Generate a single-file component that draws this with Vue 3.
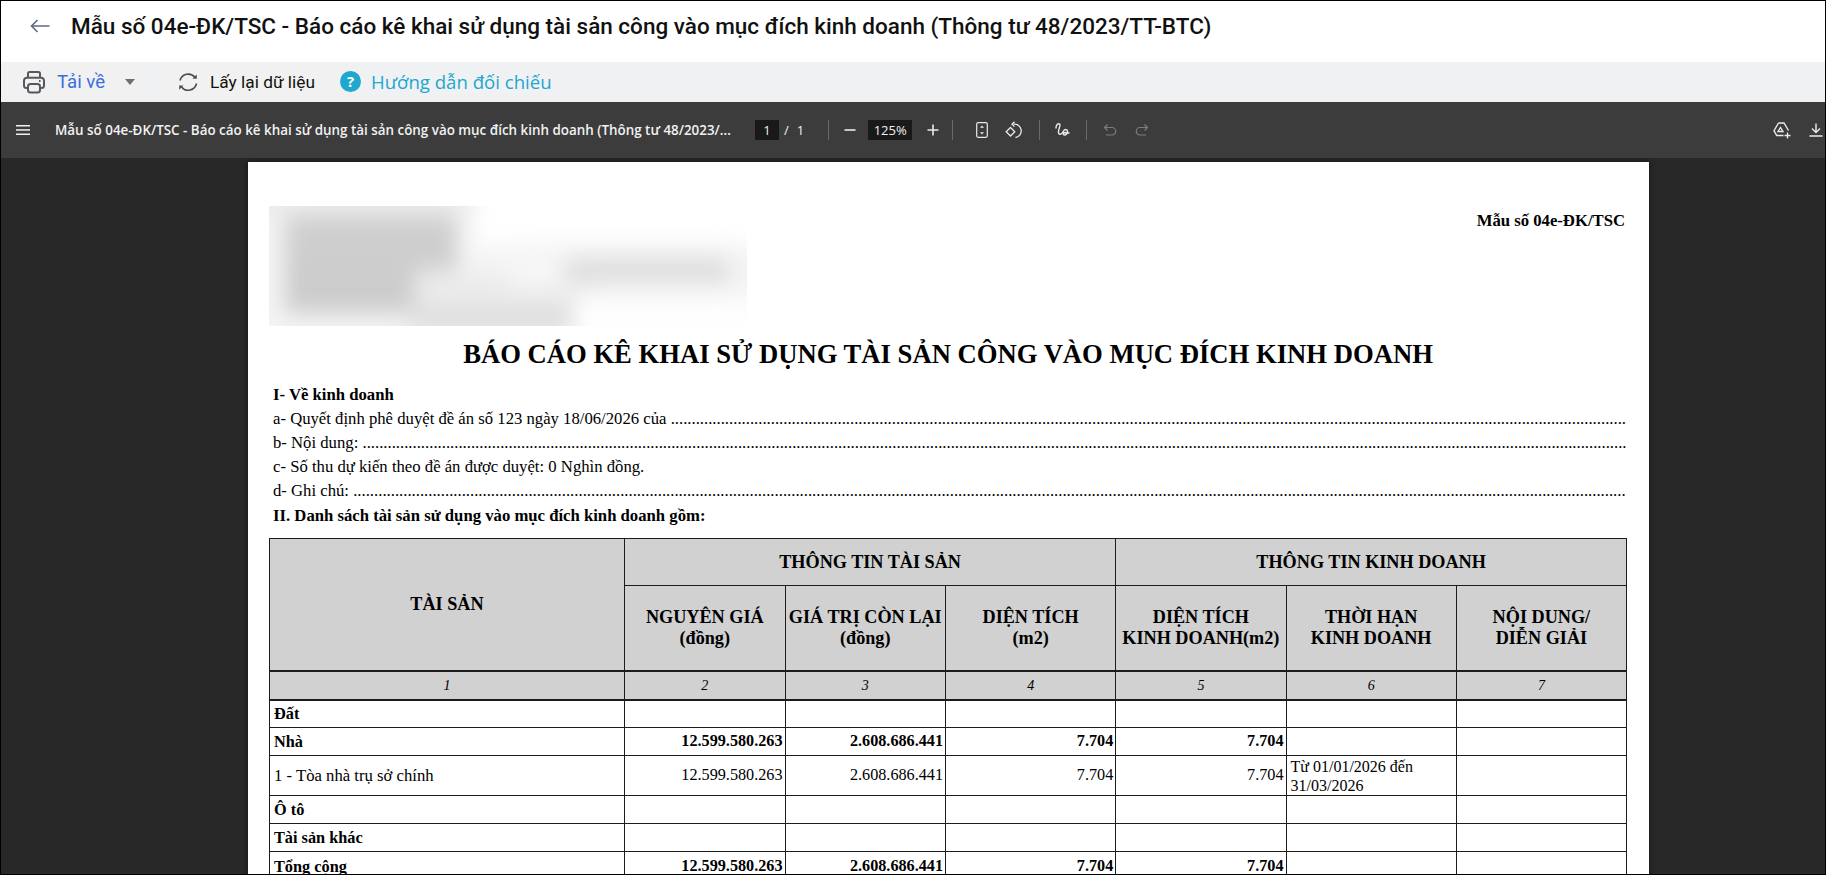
<template>
  <div class="shell">
    <header class="topbar">
      <svg class="back" width="20" height="14" viewBox="0 0 20 14" fill="none" stroke="#5f6b80" stroke-width="1.6">
        <path d="M19.5 7H1.5M7.5 1L1.5 7l6 6" />
      </svg>
      <h1 class="title">{{ reportTitle }}</h1>
    </header>

    <div class="actions">
      <button class="action action-print">
        <svg width="24" height="24" viewBox="0 0 24 24" fill="none" stroke="#55595f" stroke-width="2">
          <path d="M6 8V3.5A1.5 1.5 0 0 1 7.500 2h9A1.500 1.500 0 0 1 18 3.500V8" />
          <path d="M6 18H4.500A2.500 2.500 0 0 1 2 15.500V10.500A3 3 0 0 1 5 7.800h14a3 3 0 0 1 3 2.700v5a2.500 2.500 0 0 1-2.500 2.500H18" />
          <rect x="6" y="14" width="12" height="8.500" rx="2.500" />
          <path d="M17 11h1.500" />
        </svg>
        <span class="action-blue">Tải về</span>
        <span class="caret"></span>
      </button>
      <button class="action action-reload">
        <svg width="24" height="24" viewBox="0 0 24 24" fill="none" stroke="#4a4d52" stroke-width="1.600">
          <path d="M4 10.500A8.500 8.500 0 0 1 19 7.500" />
          <path d="M20.500 13.500A8.500 8.500 0 0 1 5.500 17" />
          <path d="M20.800 4.500v4.300h-4.300z" fill="#4a4d52" stroke="none" />
          <path d="M3.200 19.800v-4.300h4.300z" fill="#4a4d52" stroke="none" />
        </svg>
        <span>Lấy lại dữ liệu</span>
      </button>
      <a class="guide">
        <span class="guide-icon">?</span>
        <span>Hướng dẫn đối chiếu</span>
      </a>
    </div>

    <div class="viewerbar">
      <svg class="menu" width="14" height="12" viewBox="0 0 14 12" fill="#f1f1f1">
        <rect y="1" width="14" height="1.500" />
        <rect y="5.200" width="14" height="1.500" />
        <rect y="9.500" width="14" height="1.500" />
      </svg>
      <div class="doc-name">{{ shortTitle }}</div>
      <span class="num-box page-box">1</span>
      <span class="slash">/</span>
      <span class="page-total">1</span>
      <i class="divider div-a"></i>
      <svg class="zoom-out" width="12" height="12" viewBox="0 0 12 12" fill="#e8eaed"><rect x="0.500" y="5.200" width="11" height="1.600" /></svg>
      <span class="num-box zoom-box">125%</span>
      <svg class="zoom-in" width="12" height="12" viewBox="0 0 12 12" fill="#e8eaed"><path d="M5.200.500h1.600v4.700h4.700v1.600H6.800v4.700H5.200V6.800H.500V5.200h4.700z" /></svg>
      <i class="divider div-b"></i>
      <svg class="fit" width="12" height="16" viewBox="0 0 12 16" fill="none" stroke="#e8eaed" stroke-width="1.200">
        <rect x="0.700" y="0.700" width="10.600" height="14.600" rx="1.500" />
        <path d="M6 3.500 8 5.800H4zM6 12.500 4 10.200h4z" fill="#e8eaed" stroke="none" />
      </svg>
      <svg class="rotate" width="17" height="18" viewBox="0 0 17 18" fill="none" stroke="#e8eaed" stroke-width="1.300">
        <path d="M5.500 6.500 9.800 10.800 5.500 15 1.200 10.800z" />
        <path d="M8.500 3.200a6.500 6.500 0 0 1 2 13.300" />
        <path d="M9.500 .800 7 3.200l2.500 2.400" />
      </svg>
      <i class="divider div-c"></i>
      <svg class="draw" width="16" height="16" viewBox="0 0 16 16" fill="none" stroke="#e8eaed" stroke-width="1.400" stroke-linecap="round">
        <path d="M2 6C2 3 4 1 5.500 2c2 1-2 6-1 9 .8 2.500 3.500 1 5-2 1-2 3.500-2 4-0 .5 2-1.500 4-3 4-2 0-1.500-2.500.5-2.500L15 11" />
      </svg>
      <i class="divider div-d"></i>
      <svg class="undo" width="14" height="14" viewBox="0 0 14 14" fill="none" stroke="#7b7c7e" stroke-width="1.200">
        <path d="M1.500 4.500h7.500a3.500 3.500 0 0 1 0 7.500H3" />
        <path d="M4.500 1.500 1.500 4.500l3 3" />
      </svg>
      <svg class="redo" width="14" height="14" viewBox="0 0 14 14" fill="none" stroke="#7b7c7e" stroke-width="1.200">
        <path d="M12.500 4.500H5a3.500 3.500 0 0 0 0 7.500h6" />
        <path d="M9.500 1.500l3 3-3 3" />
      </svg>
      <svg class="drive" width="18" height="17" viewBox="0 0 18 17" fill="none" stroke="#e8eaed" stroke-width="1.400">
        <path d="M5.500 1h5.500l4.500 7.500M5.500 1 1 8.700l2.700 4.800h6.800" />
        <path d="M7.500 5.500 5 9.500h5z" />
        <path d="M14.500 10.500v6M11.500 13.500h6" />
      </svg>
      <svg class="download" width="14" height="14" viewBox="0 0 14 14" fill="none" stroke="#e8eaed" stroke-width="1.400">
        <path d="M7 .500v8.500M3 5.500 7 9.500l4-4M.500 13h13" />
      </svg>
    </div>

    <main class="viewer">
      <section class="page">
        <div class="page-top">
          <svg class="redacted" width="478" height="120" viewBox="0 0 478 120">
            <defs>
              <filter id="smear" x="-10%" y="-20%" width="120%" height="140%">
                <feGaussianBlur stdDeviation="11" />
              </filter>
            </defs>
            <rect width="478" height="120" fill="#f4f4f4" />
            <g filter="url(#smear)">
              <rect x="205" y="-30" width="300" height="70" fill="#ffffff" />
              <rect x="-20" y="-15" width="225" height="25" fill="#ececec" />
              <rect x="16" y="10" width="172" height="55" fill="#cecece" />
              <rect x="16" y="55" width="130" height="52" fill="#cccccc" />
              <rect x="146" y="68" width="170" height="32" fill="#ebebeb" />
              <rect x="240" y="34" width="225" height="48" fill="#f6f6f6" />
              <rect x="295" y="52" width="165" height="24" fill="#dcdcdc" />
              <rect x="305" y="94" width="190" height="40" fill="#ffffff" />
              <rect x="140" y="100" width="165" height="26" fill="#dedede" />
            </g>
          </svg>
          <div class="form-code">Mẫu số 04e-ĐK/TSC</div>
        </div>

        <h2 class="report-head">BÁO CÁO KÊ KHAI SỬ DỤNG TÀI SẢN CÔNG VÀO MỤC ĐÍCH KINH DOANH</h2>

        <p class="line bold">I- Về kinh doanh</p>
        <p class="line">a- Quyết định phê duyệt đề án số 123 ngày 18/06/2026 của {{ dots(229) }}</p>
        <p class="line">b- Nội dung: {{ dots(303) }}</p>
        <p class="line">c- Số thu dự kiến theo đề án được duyệt: 0 Nghìn đồng.</p>
        <p class="line">d- Ghi chú: {{ dots(305) }}</p>
        <p class="line bold section-two">II. Danh sách tài sản sử dụng vào mục đích kinh doanh gồm:</p>

        <table class="report">
          <colgroup>
            <col class="c-asset" />
            <col class="c-mid" />
            <col class="c-mid" />
            <col v-for="n in 4" :key="n" class="c-wide" />
          </colgroup>
          <thead>
            <tr class="h1">
              <th rowspan="2" class="th-asset">TÀI SẢN</th>
              <th colspan="3">THÔNG TIN TÀI SẢN</th>
              <th colspan="3">THÔNG TIN KINH DOANH</th>
            </tr>
            <tr class="h2">
              <th>NGUYÊN GIÁ<br />(đồng)</th>
              <th>GIÁ TRỊ CÒN LẠI<br />(đồng)</th>
              <th>DIỆN TÍCH<br />(m2)</th>
              <th>DIỆN TÍCH<br />KINH DOANH(m2)</th>
              <th>THỜI HẠN<br />KINH DOANH</th>
              <th>NỘI DUNG/<br />DIỄN GIẢI</th>
            </tr>
            <tr class="h3">
              <th v-for="n in 7" :key="n">{{ n }}</th>
            </tr>
          </thead>
          <tbody>
            <tr v-for="r in rows" :key="r.name" :class="[r.cls, { strong: r.strong }]">
              <td class="name">{{ r.name }}</td>
              <td v-for="(v, i) in r.values" :key="i" class="val">{{ v }}</td>
              <td class="term">
                <template v-if="r.term">Từ 01/01/2026 đến<br />31/03/2026</template>
              </td>
              <td></td>
            </tr>
          </tbody>
        </table>
      </section>
    </main>
  </div>
</template>

<script setup>
const reportTitle = 'Mẫu số 04e-ĐK/TSC - Báo cáo kê khai sử dụng tài sản công vào mục đích kinh doanh (Thông tư 48/2023/TT-BTC)'
const shortTitle = 'Mẫu số 04e-ĐK/TSC - Báo cáo kê khai sử dụng tài sản công vào mục đích kinh doanh (Thông tư 48/2023/...'

const dots = (count) => '.'.repeat(count)

const totals = ['12.599.580.263', '2.608.686.441', '7.704', '7.704']
const empty = ['', '', '', '']

const rows = [
  { name: 'Đất', values: empty, strong: true, cls: 'r-land' },
  { name: 'Nhà', values: totals, strong: true, cls: 'r-house' },
  { name: '1 - Tòa nhà trụ sở chính', values: totals, term: true, cls: 'r-item' },
  { name: 'Ô tô', values: empty, strong: true, cls: 'r-car' },
  { name: 'Tài sản khác', values: empty, strong: true, cls: 'r-other' },
  { name: 'Tổng cộng', values: totals, strong: true, cls: 'r-total' }
]
</script>

<style scoped>
.shell {
  height: 875px;
  box-sizing: border-box;
  border: 1px solid #000;
  display: flex;
  flex-direction: column;
  overflow: hidden;
  background: #fff;
  font-family: Roboto, "Noto Sans", sans-serif;
}

/* top title */
.topbar {
  height: 61px;
  flex: none;
  display: flex;
  align-items: center;
  padding-bottom: 11px;
  box-sizing: border-box;
}

.back {
  margin-left: 29px;
}

.title {
  margin: 0 0 0 21px;
  font-size: 22.500px;
  font-weight: 500;
  color: #111;
  white-space: nowrap;
}

/* action row */
.actions {
  height: 40px;
  flex: none;
  display: flex;
  align-items: center;
  background: #eff1f3;
}

.action {
  height: 36px;
  display: flex;
  align-items: center;
  border: none;
  background: #f1f1f1;
  border-radius: 4px;
  font-family: inherit;
  font-size: 17.300px;
  color: #111;
  padding: 0;
}

.action-print {
  width: 145px;
  margin-left: 4px;
  padding-left: 17px;
}

.action-blue {
  margin-left: 11px;
  font-size: 18.600px;
  color: #3a6fdc;
}

.caret {
  margin-left: 20px;
  border-left: 5px solid transparent;
  border-right: 5px solid transparent;
  border-top: 6px solid #6b7078;
}

.action-reload {
  width: 196px;
  margin-left: 12px;
  padding-left: 14px;
}

.action-reload span {
  margin-left: 10px;
}

.guide {
  margin-left: -18px;
  margin-top: -1px;
  display: flex;
  align-items: center;
  font-family: "Open Sans", sans-serif;
  font-size: 18.600px;
  color: #1ea7cf;
}

.guide-icon {
  width: 21px;
  height: 21px;
  border-radius: 50%;
  background: #1ea7cf;
  color: #fff;
  font-size: 15px;
  font-weight: 700;
  line-height: 21px;
  text-align: center;
  margin-right: 10px;
}

/* pdf viewer bar */
.viewerbar {
  height: 56px;
  flex: none;
  display: flex;
  align-items: center;
  background: #3c3c3c;
  color: #f1f1f1;
  font-family: "Open Sans", "Noto Sans", sans-serif;
  font-size: 13px;
}

.menu {
  margin-left: 15px;
  flex: none;
}

.doc-name {
  width: 680px;
  margin-left: 25px;
  font-weight: 600;
  font-size: 13.400px;
  white-space: nowrap;
}

.num-box {
  height: 20px;
  line-height: 20px;
  background: #191919;
  text-align: center;
  flex: none;
}

.page-box {
  width: 24px;
  margin-left: 20px;
}

.slash {
  margin-left: 5px;
}

.page-total {
  margin-left: 8px;
}

.divider {
  width: 1px;
  height: 20px;
  background: #6a6b6d;
  flex: none;
}

.div-a {
  margin-left: 24px;
}

.zoom-out {
  margin-left: 15px;
}

.zoom-box {
  width: 44px;
  margin-left: 12px;
}

.zoom-in {
  margin-left: 15px;
}

.div-b {
  margin-left: 13px;
}

.fit {
  margin-left: 23px;
}

.rotate {
  margin-left: 17px;
}

.div-c {
  margin-left: 17px;
}

.draw {
  margin-left: 14px;
}

.div-d {
  margin-left: 16px;
}

.undo {
  margin-left: 16px;
}

.redo {
  margin-left: 18px;
}

.drive {
  margin-left: auto;
}

.download {
  margin-left: 18px;
  margin-right: 2px;
  flex: none;
}

/* document area */
.viewer {
  flex: 1;
  min-height: 0;
  background: #282828;
  padding: 4px 0 0 247px;
  overflow: hidden;
}

.page {
  width: 1401px;
  box-sizing: border-box;
  background: #fff;
  padding: 44px 22px 0 21px;
  font-family: "Liberation Serif", "Times New Roman", serif;
  color: #000;
  box-shadow: 0 0 6px rgba(0, 0, 0, 0.5);
  height: 720px;
  overflow: hidden;
}

.page-top {
  display: flex;
  justify-content: space-between;
  height: 120px;
}

.redacted {
  display: block;
  flex: none;
}

.form-code {
  font-size: 16.700px;
  font-weight: 700;
  margin-top: 5px;
  margin-right: 2px;
}

.report-head {
  margin: 8px 0 9px;
  height: 40px;
  line-height: 40px;
  text-align: center;
  font-size: 26.650px;
  font-weight: 700;
}

.line {
  margin: 0;
  padding-left: 4px;
  height: 24px;
  line-height: 24px;
  font-size: 16.700px;
  white-space: nowrap;
}

.bold {
  font-weight: 700;
}

.section-two {
  margin-top: 1px;
}

.report {
  width: 1357px;
  margin-top: 10px;
  table-layout: fixed;
  border-collapse: collapse;
  font-size: 16.200px;
}

.c-asset {
  width: 355px;
}

.c-mid {
  width: 160.500px;
}

.c-wide {
  width: 170.250px;
}

.report th,
.report td {
  border: 1px solid #1c1c1c;
  padding: 0;
}

.report th {
  background: #d1d1d1;
  font-size: 18.200px;
  font-weight: 700;
  line-height: 21px;
}

.h1 {
  height: 47px;
}

.th-asset {
  vertical-align: middle;
}

.h2 {
  height: 85px;
}

.h3 {
  height: 29px;
}

.report .h3 th {
  font-weight: 400;
  font-style: italic;
  font-size: 14px;
  border-top-width: 2px;
  border-bottom-width: 2px;
}

.report tbody tr {
  height: 28px;
}

.report tbody .r-item {
  height: 40px;
}

.report tbody .r-total {
  height: 30px;
}

.strong td {
  font-weight: 700;
}

.report .name {
  padding-left: 4px;
  font-size: 16.700px;
}

.report .strong .name {
  font-size: 16.300px;
}

.report .val {
  text-align: right;
  padding-right: 2px;
}

.report .term {
  font-size: 16px;
  line-height: 19px;
  padding-left: 4px;
}
</style>

<style>
html,
body {
  margin: 0;
  background: #282828;
}
</style>
